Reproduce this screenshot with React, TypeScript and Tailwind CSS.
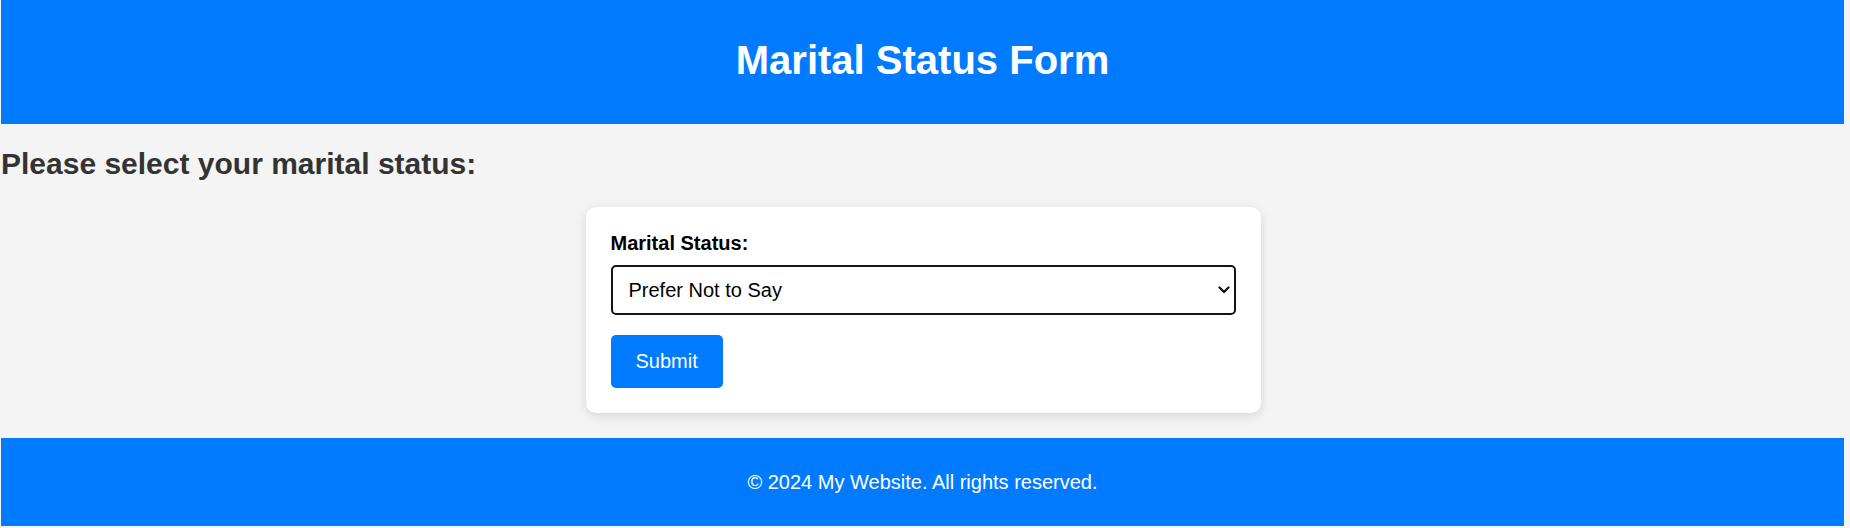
import React, { useState } from 'react';

const STATUSES = ['Single', 'Married', 'Divorced', 'Widowed', 'Prefer Not to Say'];

const App: React.FC = () => {
  const [status, setStatus] = useState('Prefer Not to Say');

  return (
    <div className="min-h-screen bg-[#f4f4f4] font-['Liberation_Sans',Arial,sans-serif] text-[20px] leading-[23px] text-[#333]">
      <header className="ml-[1px] mr-[6px] bg-[#007bff] pt-[37px] pb-[41px] text-center text-white">
        <h1 className="text-[40px] leading-[46px] font-bold">Marital Status Form</h1>
      </header>

      <main className="ml-[1px] mr-[5px]">
        <h2 className="mt-[23px] mb-[26px] text-[30px] leading-[34px] font-bold text-[#333]">
          Please select your marital status:
        </h2>

        {/* Form card */}
        <form
          onSubmit={(e) => e.preventDefault()}
          className="mx-auto w-[675px] rounded-[10px] bg-white p-[25px] shadow-[0_3px_12px_rgba(0,0,0,0.12)]"
        >
          <label htmlFor="status" className="block font-bold text-black">
            Marital Status:
          </label>
          <div className="relative mt-[10px]">
            <select
              id="status"
              value={status}
              onChange={(e) => setStatus(e.target.value)}
              className="block h-[50px] w-full appearance-none rounded-[5px] border-2 border-[#141414] bg-white pl-[16px] pr-[30px] text-[20px] text-black outline-none"
            >
              {STATUSES.map((s) => (
                <option key={s} value={s}>
                  {s}
                </option>
              ))}
            </select>
            <svg
              className="pointer-events-none absolute right-[6px] top-1/2 -translate-y-1/2"
              width="12"
              height="8"
              viewBox="0 0 12 8"
              fill="none"
            >
              <path d="M1.5 1.5 L6 6 L10.5 1.5" stroke="#111" strokeWidth="2.2" strokeLinecap="round" strokeLinejoin="round" />
            </svg>
          </div>
          <button
            type="submit"
            className="mt-[20px] block h-[53px] rounded-[5px] bg-[#007bff] px-[25px] text-[20px] text-white"
          >
            Submit
          </button>
        </form>
      </main>

      <footer className="ml-[1px] mr-[6px] mt-[25px] bg-[#007bff] pt-[33px] pb-[32px] text-center text-white">
        <p>© 2024 My Website. All rights reserved.</p>
      </footer>
    </div>
  );
};

export default App;
